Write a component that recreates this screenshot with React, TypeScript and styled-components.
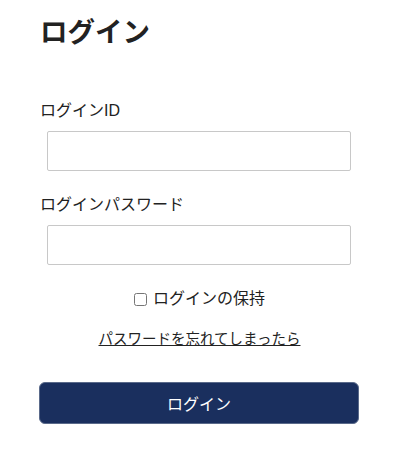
import React from "react";
import styled, { createGlobalStyle } from "styled-components";

const Global = createGlobalStyle`
  html, body { margin: 0; padding: 0; background: #fff; }
  body { font-family: "Liberation Sans", "Noto Sans CJK JP", sans-serif; color: #222; }
`;

const Page = styled.div`
  padding: 12px 43px 0 40px;
  width: 319px;
`;

const Title = styled.h1`
  margin: 0;
  font-size: 27.5px;
  font-weight: 700;
  line-height: 42px;
  color: #222;
`;

const Form = styled.form`
  display: flex;
  flex-direction: column;
  margin-top: 45px;
`;

const Field = styled.div`
  display: flex;
  flex-direction: column;
  margin-bottom: 22px;
`;

const Label = styled.label`
  font-size: 16px;
  line-height: 24px;
  color: #222;
`;

const Input = styled.input`
  box-sizing: border-box;
  margin: 8px 0 0 7px;
  width: 304px;
  height: 40px;
  border: 1px solid #c8c8c8;
  border-radius: 2px;
  font-size: 16px;
  padding: 0 8px;
`;

const Remember = styled.label`
  display: flex;
  align-items: center;
  justify-content: center;
  gap: 6px;
  font-size: 16px;
  line-height: 24px;
  margin-top: 0;
`;

const Check = styled.input`
  margin: 0;
  width: 13px;
  height: 13px;
`;

const Forgot = styled.a`
  display: block;
  text-align: center;
  margin-top: 16px;
  font-size: 14.5px;
  line-height: 24px;
  color: #222;
  text-decoration: underline;
`;

const Submit = styled.button`
  margin-top: 31px;
  height: 42px;
  width: 320px;
  margin-left: -1px;
  border: 1px solid #5a6a8a;
  border-radius: 6px;
  background: #1a2f5e;
  color: #fff;
  font-family: inherit;
  font-size: 16px;
  cursor: pointer;
`;

export default function App() {
  return (
    <>
      <Global />
      <Page>
        <Title>ログイン</Title>
        <Form onSubmit={(e) => e.preventDefault()}>
          <Field>
            <Label>ログインID</Label>
            <Input type="text" />
          </Field>
          <Field>
            <Label>ログインパスワード</Label>
            <Input type="password" />
          </Field>
          <Remember>
            <Check type="checkbox" />
            ログインの保持
          </Remember>
          <Forgot href="#">パスワードを忘れてしまったら</Forgot>
          <Submit type="submit">ログイン</Submit>
        </Form>
      </Page>
    </>
  );
}
